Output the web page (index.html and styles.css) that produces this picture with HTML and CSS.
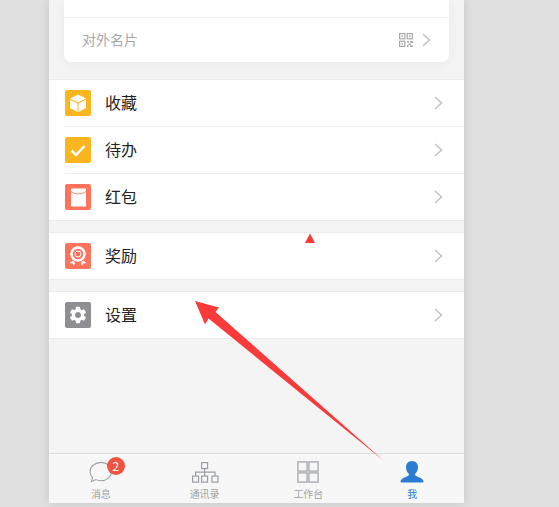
FILE: index.html
```html
<!DOCTYPE html>
<html lang="zh-CN">
<head>
    <meta charset="UTF-8">
    <meta name="viewport" content="width=device-width, initial-scale=1.0">
    <title>我</title>
    <link rel="stylesheet" href="styles.css">
</head>
<body>
    <div class="phone">
        <main class="content">
            <div class="card">
                <div class="card-top"></div>
                <div class="card-row">
                    <span class="card-label">对外名片</span>
                    <svg class="qr" viewBox="0 0 14 14" width="14" height="14">
                        <g fill="none" stroke="#a8a8a8" stroke-width="1.2">
                            <rect x="0.6" y="0.6" width="5.2" height="5.2"/>
                            <rect x="8.2" y="0.6" width="5.2" height="5.2"/>
                            <rect x="0.6" y="8.2" width="5.2" height="5.2"/>
                        </g>
                        <g fill="#a8a8a8">
                            <rect x="2.4" y="2.4" width="1.6" height="1.6"/>
                            <rect x="10" y="2.4" width="1.6" height="1.6"/>
                            <rect x="2.4" y="10" width="1.6" height="1.6"/>
                            <path d="M8 8h2v1.5H8zM11 8h3v2h-1.5V9.500H11zM9.500 10.500H12V12H9.500zM8 12h1.500v2H8zM11 12.500h3V14h-3z"/>
                        </g>
                    </svg>
                    <svg class="chev" viewBox="0 0 9 14" width="9" height="14"><path d="M1 1l6.500 6L1 13" fill="none" stroke="#c4c4c4" stroke-width="1.600"/></svg>
                </div>
            </div>

            <section class="group group-first">
                <div class="row">
                    <span class="ico ico-yellow">
                        <svg viewBox="0 0 26 26" width="26" height="26">
                            <path d="M13 4.500l8 4-8 4-8-4z" fill="#fff"/>
                            <path d="M5 9.800l7.500 3.700V22L5 18z" fill="#fff"/>
                            <path d="M21 9.800l-7.500 3.700V22L21 18z" fill="#fff"/>
                        </svg>
                    </span>
                    <span class="row-label">收藏</span>
                    <svg class="chev" viewBox="0 0 9 14" width="9" height="14"><path d="M1 1l6.500 6L1 13" fill="none" stroke="#c4c4c4" stroke-width="1.600"/></svg>
                </div>
                <div class="row">
                    <span class="ico ico-yellow">
                        <svg viewBox="0 0 26 26" width="26" height="26"><path d="M6.500 13.500l4.500 4.500 8.500-9" fill="none" stroke="#fff" stroke-width="2.500"/></svg>
                    </span>
                    <span class="row-label">待办</span>
                    <svg class="chev" viewBox="0 0 9 14" width="9" height="14"><path d="M1 1l6.500 6L1 13" fill="none" stroke="#c4c4c4" stroke-width="1.600"/></svg>
                </div>
                <div class="row">
                    <span class="ico ico-red">
                        <svg viewBox="0 0 26 26" width="26" height="26">
                            <rect x="6" y="4.500" width="15" height="18" fill="#fff"/>
                            <path d="M6 7.500c4 3.200 11 3.200 15 0" fill="none" stroke="#ff725c" stroke-width="0.900"/>
                        </svg>
                    </span>
                    <span class="row-label">红包</span>
                    <svg class="chev" viewBox="0 0 9 14" width="9" height="14"><path d="M1 1l6.500 6L1 13" fill="none" stroke="#c4c4c4" stroke-width="1.600"/></svg>
                </div>
            </section>

            <section class="group">
                <div class="row">
                    <span class="ico ico-red">
                        <svg viewBox="0 0 26 26" width="26" height="26">
                            <circle cx="13" cy="11" r="6.500" fill="none" stroke="#fff" stroke-width="2.500"/>
                            <circle cx="13" cy="11" r="3" fill="none" stroke="#fff" stroke-width="1"/>
                            <path d="M4.500 20l3.500-2.500 2 2.500-1 2.500-1.500-2zM21.500 20L18 17.500 16 20l1 2.500 1.500-2z" fill="#fff"/>
                        </svg>
                    </span>
                    <span class="row-label">奖励</span>
                    <svg class="chev" viewBox="0 0 9 14" width="9" height="14"><path d="M1 1l6.500 6L1 13" fill="none" stroke="#c4c4c4" stroke-width="1.600"/></svg>
                </div>
            </section>

            <section class="group">
                <div class="row">
                    <span class="ico ico-gray">
                        <svg viewBox="0 0 26 26" width="26" height="26">
                            <path transform="translate(13 13) scale(.85) translate(-12 -12)" fill="#fff" d="M19.140 12.940c.04-.3.06-.61.06-.94 0-.32-.02-.64-.07-.94l2.030-1.580a.49.49 0 0 0 .12-.61l-1.920-3.320a.488.488 0 0 0-.59-.22l-2.390.96c-.5-.38-1.030-.7-1.620-.94l-.36-2.540a.484.484 0 0 0-.48-.41h-3.840c-.24 0-.43.17-.47.41l-.36 2.540c-.59.24-1.130.57-1.620.94l-2.390-.96c-.22-.08-.47 0-.59.22L2.740 8.870c-.12.21-.08.47.12.61l2.030 1.580c-.05.3-.09.63-.09.94s.02.64.07.94l-2.030 1.580a.49.49 0 0 0-.12.61l1.920 3.320c.12.22.37.29.59.22l2.390-.96c.5.38 1.030.7 1.620.94l.36 2.540c.05.24.24.41.48.41h3.840c.24 0 .44-.17.47-.41l.36-2.540c.59-.24 1.130-.56 1.620-.94l2.390.96c.22.08.47 0 .59-.22l1.920-3.320c.12-.22.07-.47-.12-.61l-2.010-1.580zM12 15.600c-1.980 0-3.600-1.620-3.600-3.600s1.620-3.600 3.600-3.600 3.600 1.620 3.600 3.600-1.620 3.600-3.600 3.600z"/>
                        </svg>
                    </span>
                    <span class="row-label">设置</span>
                    <svg class="chev" viewBox="0 0 9 14" width="9" height="14"><path d="M1 1l6.500 6L1 13" fill="none" stroke="#c4c4c4" stroke-width="1.600"/></svg>
                </div>
            </section>
        </main>

        <nav class="tabbar">
            <div class="tab">
                <span class="tab-icon">
                    <svg viewBox="0 0 26 24" width="24" height="22">
                        <path d="M13 1.500c6.300 0 11.500 4.300 11.500 10S19.300 21.500 13 21.500c-2 0-4-.4-5.600-1.200L2.500 22.500l1.300-4.300C2 16.400 1 14.100 1 11.500c0-5.700 5.700-10 12-10z" fill="none" stroke="#9a9ea5" stroke-width="1.100"/>
                    </svg>
                    <span class="badge">2</span>
                </span>
                <span class="tab-label">消息</span>
            </div>
            <div class="tab">
                <span class="tab-icon">
                    <svg viewBox="0 0 28 24" width="28" height="24">
                        <g fill="none" stroke="#9a9ea5" stroke-width="1.200">
                            <rect x="10.600" y="2.600" width="6" height="6"/>
                            <rect x="1.600" y="16.100" width="6" height="6"/>
                            <rect x="10.600" y="16.100" width="6" height="6"/>
                            <rect x="21" y="16.100" width="6" height="6"/>
                            <path d="M13.600 8.600v7.500M4.600 16.100v-4h19.400v4"/>
                        </g>
                    </svg>
                </span>
                <span class="tab-label">通讯录</span>
            </div>
            <div class="tab">
                <span class="tab-icon">
                    <svg viewBox="0 0 24 24" width="22" height="22">
                        <g fill="none" stroke="#9a9ea5" stroke-width="1.300">
                            <rect x="1" y="1" width="10" height="10"/>
                            <rect x="13" y="1" width="10" height="10"/>
                            <rect x="1" y="13" width="10" height="10"/>
                            <rect x="13" y="13" width="10" height="10"/>
                        </g>
                    </svg>
                </span>
                <span class="tab-label">工作台</span>
            </div>
            <div class="tab tab-on">
                <span class="tab-icon">
                    <svg viewBox="0 0 24 24" width="24" height="24">
                        <path d="M12 1c3.800 0 6 2.800 6 6.300 0 2.800-1.200 5.200-2.800 6.500-.5.900-.1 1.800 1 2.300 3 1.200 6.300 2.500 7.300 5 .2.700-.1 1.400-.9 1.400H1.400c-.8 0-1.100-.7-.9-1.400 1-2.500 4.300-3.800 7.300-5 1.100-.5 1.500-1.400 1-2.300C7.200 12.500 6 10.100 6 7.300 6 3.800 8.200 1 12 1z" fill="#2b7dd1"/>
                    </svg>
                </span>
                <span class="tab-label">我</span>
            </div>
        </nav>
    </div>

    <!-- red annotation marks on top of the screenshot -->
    <svg class="marks" viewBox="0 0 559 507" width="559" height="507">
        <path d="M305 243L310 233.500 315 243z" fill="#f93a3a"/>
        <path d="M195 301L219 307.500 215.500 312 384 461 208.500 318.500 205 324.500z" fill="#f93a3a"/>
    </svg>
</body>
</html>
```

FILE: styles.css
```css
* {
    box-sizing: border-box;
}
body {
    margin: 0;
    height: 507px;
    overflow: hidden;
    background: #e0e0e0;
    font-family: "Noto Sans CJK SC", "Noto Sans", sans-serif;
    color: #222;
}
.phone {
    width: 415px;
    height: 503px;
    margin-left: 49px;
    background: #f4f4f4;
    box-shadow: 0 0 10px rgba(0, 0, 0, 0.12);
    display: flex;
    flex-direction: column;
}
.content {
    flex: 1;
}
.card {
    margin: 0 15px;
    background: #fff;
    border-radius: 0 0 7px 7px;
    box-shadow: 0 2px 12px rgba(0, 0, 0, 0.05);
}
.card-top {
    height: 18px;
    border-bottom: 1px solid #f1f1f1;
}
.card-row {
    height: 44px;
    padding: 0 18px;
    display: flex;
    align-items: center;
}
.card-label {
    flex: 1;
    padding-bottom: 3px;
    font-size: 14px;
    color: #a8a8a8;
}
.qr {
    margin-right: 9px;
}
.group {
    margin-top: 11px;
    background: #fff;
    border-top: 1px solid #ebebeb;
    border-bottom: 1px solid #ebebeb;
}
.group-first {
    margin-top: 17px;
}
.row {
    height: 46px;
    margin-left: 16px;
    padding-right: 21px;
    display: flex;
    align-items: center;
}
.row + .row {
    height: 47px;
    border-top: 1px solid #efefef;
}
.ico {
    width: 26px;
    height: 26px;
    border-radius: 2px;
    display: flex;
}
.ico-yellow {
    background: #fbb61f;
}
.ico-red {
    background: #ff725c;
}
.ico-gray {
    background: #8e8e93;
}
.row-label {
    flex: 1;
    margin-left: 14px;
    padding-bottom: 3px;
    font-size: 16px;
}
.tabbar {
    height: 50px;
    background: #f7f7f7;
    border-top: 1px solid #dcdcdc;
    display: grid;
    grid-template-columns: repeat(4, 1fr);
}
.tab {
    padding-top: 6px;
    display: flex;
    flex-direction: column;
    align-items: center;
}
.tab-icon {
    position: relative;
    height: 24px;
    display: flex;
    align-items: center;
}
.tab-label {
    margin-top: 3px;
    font-size: 10px;
    line-height: 14px;
    color: #a3a3a3;
}
.tab-on .tab-label {
    color: #2b7dd1;
}
.badge {
    position: absolute;
    top: -3px;
    left: 18px;
    width: 18px;
    height: 18px;
    border-radius: 50%;
    background: #f0533f;
    color: #fff;
    font-size: 12px;
    line-height: 18px;
    text-align: center;
}
.marks {
    position: absolute;
    top: 0;
    left: 0;
    pointer-events: none;
}
```
